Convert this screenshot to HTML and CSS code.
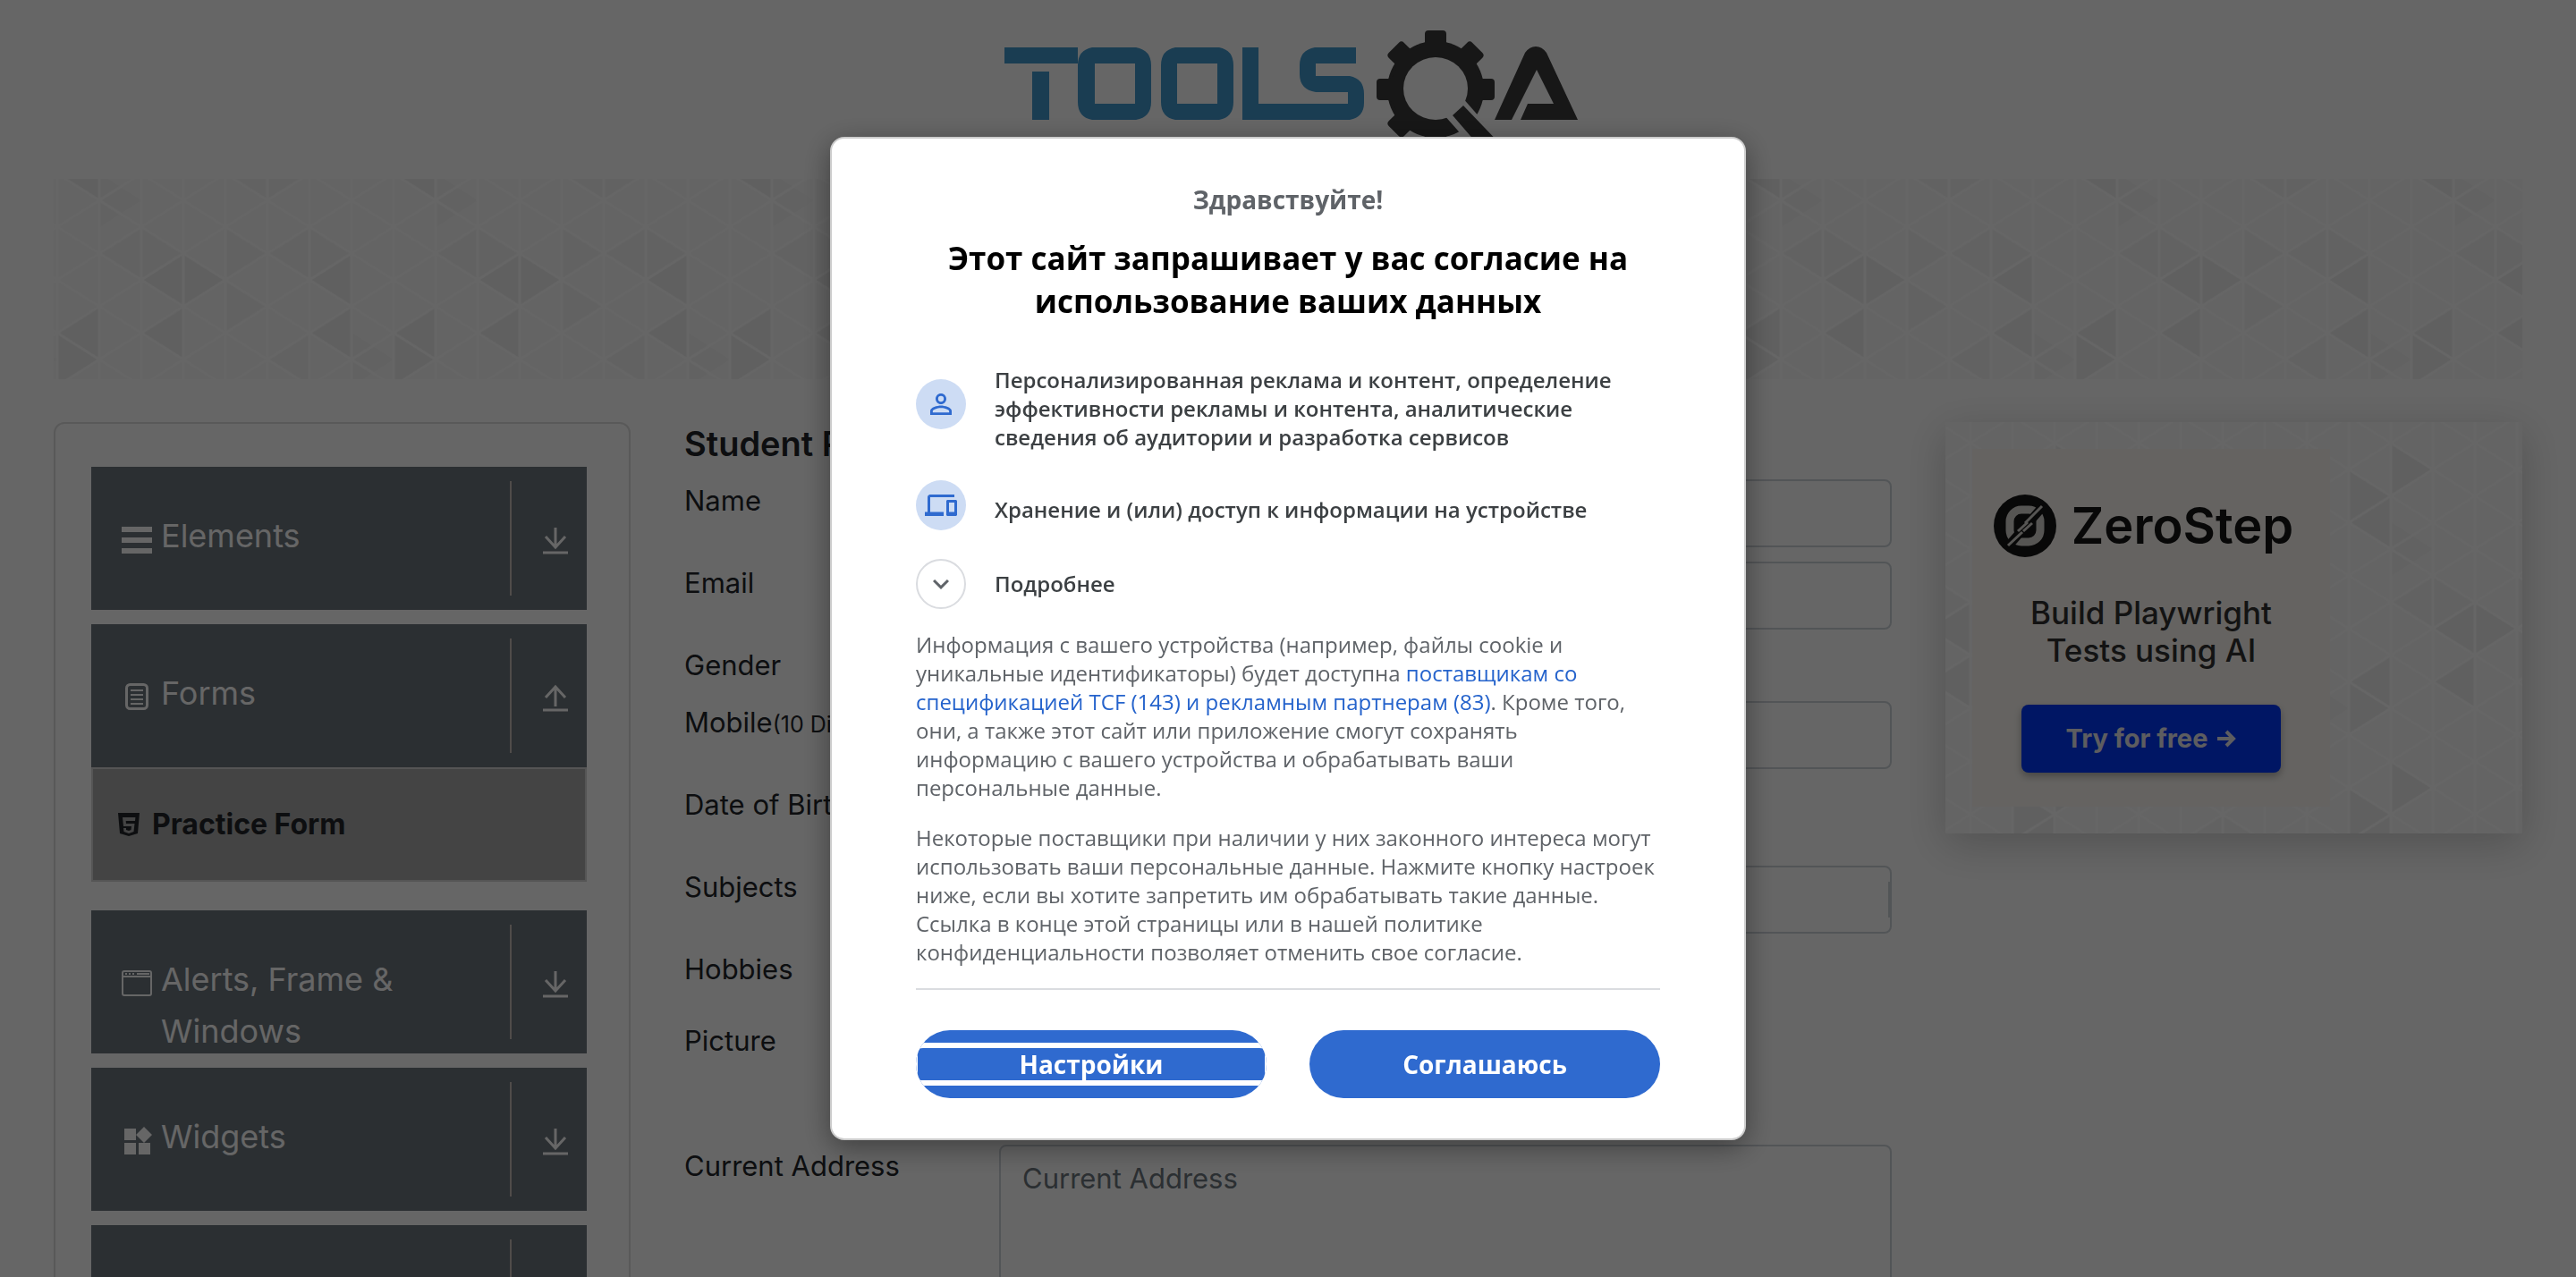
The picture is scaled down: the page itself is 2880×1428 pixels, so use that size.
FILE: index.html
```html
<!DOCTYPE html>
<html lang="ru">
<head>
<meta charset="utf-8">
<meta name="viewport" content="width=device-width, initial-scale=1">
<title>ToolsQA</title>
<link rel="stylesheet" href="styles.css">
</head>
<body>
<svg class="sprite" aria-hidden="true">
  <symbol id="arrow-down" viewBox="0 0 28 32"><path d="M14 1v22M3 11l11 12 11-12M0 29h28" fill="none" stroke="currentColor" stroke-width="3"/></symbol>
  <symbol id="arrow-up" viewBox="0 0 28 32"><path d="M14 25V3M3 15L14 3l11 12M0 29h28" fill="none" stroke="currentColor" stroke-width="3"/></symbol>
</svg>

<header class="site-header">
  <a href="#" class="logo" aria-label="ToolsQA">
    <svg viewBox="1115 33 650 134" width="650" height="134" aria-hidden="true">
      <g fill="#4299ce">
        <path d="M1123 53h82v18h-82zM1154 80h19v54h-19z"/>
        <path fill-rule="evenodd" d="M1221 53h49q17 3 17 20v41q0 17-17 20h-49q-16-3-16-20V73q0-17 16-20zM1224 71v45h45V71z"/>
        <path fill-rule="evenodd" d="M1314 53h49q16 3 16 20v41q0 17-16 20h-49q-16-3-16-20V73q0-17 16-20zM1316 71v45h45V71z"/>
        <path d="M1389 53h18v63h100v-13h-36q-18-3-18-20V73q0-17 17-20h46v18h-45v14h38q16 3 16 20v10q0 16-16 19h-120z"/>
      </g>
      <mask id="gear-cut">
        <path fill="#fff" d="M1530 30h150v140h-150z"/>
        <ellipse cx="1605" cy="99" rx="36" ry="35"/>
        <path d="M1634 108l56 64h-37l-39-44z"/>
      </mask>
      <g fill="#3a3a3a">
        <g mask="url(#gear-cut)">
          <circle cx="1605" cy="100" r="54"/>
          <path id="tooth" d="M1597 34h16q4 0 4 4v9q1 6 9 8v90q-8 2-9 8v9q0 4-4 4h-16q-4 0-4-4v-9q-1-6-9-8V55q8-2 9-8v-9q0-4 4-4z"/>
          <use href="#tooth" transform="rotate(45 1605 100)"/>
          <use href="#tooth" transform="rotate(90 1605 100)"/>
          <use href="#tooth" transform="rotate(135 1605 100)"/>
        </g>
        <path d="M1636 118l46 48h-26l-32-37z"/>
        <path d="M1671 134l34-75q5-7 12-7t12 7l35 75h-64l8-18h29l-19-38-28 56z"/>
      </g>
    </svg>
  </a>
</header>

<main class="page">
  <div class="banner"></div>
  <div class="columns">
    <nav class="sidebar">
      <section class="group">
        <button type="button" class="group-head">
          <svg class="group-icon" viewBox="0 0 34 34"><path d="M0 3h34v6H0zM0 15h34v6H0zM0 27h34v6H0z" fill="currentColor"/></svg>
          <span class="group-title">Elements</span>
          <span class="group-toggle"><svg viewBox="0 0 28 32"><use href="#arrow-down"/></svg></span>
        </button>
      </section>
      <section class="group open">
        <button type="button" class="group-head">
          <svg class="group-icon" viewBox="0 0 34 34"><rect x="5.500" y="3.500" width="23" height="27" rx="4" fill="none" stroke="currentColor" stroke-width="3"/><path d="M10 10h14M10 15h14M10 20h14M10 25h14" stroke="currentColor" stroke-width="2"/></svg>
          <span class="group-title">Forms</span>
          <span class="group-toggle"><svg viewBox="0 0 28 32"><use href="#arrow-up"/></svg></span>
        </button>
        <a href="#" class="group-item">
          <svg viewBox="0 0 24 28"><path fill="currentColor" fill-rule="evenodd" d="M0 1h24l-2 23-10 3-10-3zM5 6l1 10h9l-.5 4-2.500 1-3-1v-2H6l.5 4 5.500 2 5.500-2 1-9H9l-.3-3H19l.4-4z"/></svg>
          Practice Form
        </a>
      </section>
      <section class="group">
        <button type="button" class="group-head">
          <svg class="group-icon" viewBox="0 0 34 34"><rect x="1" y="4" width="32" height="27" rx="2" fill="none" stroke="currentColor" stroke-width="2"/><path d="M1 10h32" stroke="currentColor" stroke-width="2"/><path d="M4 7h2M8 7h2M12 7h2M17 7h14" stroke="currentColor" stroke-width="2"/></svg>
          <span class="group-title">Alerts, Frame &amp; Windows</span>
          <span class="group-toggle"><svg viewBox="0 0 28 32"><use href="#arrow-down"/></svg></span>
        </button>
      </section>
      <section class="group">
        <button type="button" class="group-head">
          <svg class="group-icon" viewBox="0 0 34 34"><path fill="currentColor" d="M3 4h13v13H3zM3 20h13v13H3zM19 20h13v13H19zM25 2l9 9-9 9-9-9z"/></svg>
          <span class="group-title">Widgets</span>
          <span class="group-toggle"><svg viewBox="0 0 28 32"><use href="#arrow-down"/></svg></span>
        </button>
      </section>
      <section class="group">
        <button type="button" class="group-head" aria-label="Interactions">
          <span class="group-title"></span>
          <span class="group-toggle"></span>
        </button>
      </section>
    </nav>

    <form class="form">
      <h1 class="form-title">Student Registration Form</h1>
      <div class="row"><label for="name">Name</label><input id="name" type="text"></div>
      <div class="row"><label for="email">Email</label><input id="email" type="email"></div>
      <div class="row row-gender"><span>Gender</span></div>
      <div class="row"><label for="mobile">Mobile<small>(10 Digits)</small></label><input id="mobile" type="tel"></div>
      <div class="row"><label for="birth">Date of Birth</label><input id="birth" class="short" type="text"></div>
      <div class="row"><label for="subjects">Subjects</label><div class="subjects"><input id="subjects" type="text"><span class="subjects-bar"></span></div></div>
      <div class="row row-hobbies"><span>Hobbies</span></div>
      <div class="row row-picture"><span>Picture</span></div>
      <div class="row"><label for="address">Current Address</label><textarea id="address" rows="5" placeholder="Current Address"></textarea></div>
    </form>

    <aside class="promo">
      <div class="promo-card">
        <div class="promo-brand">
          <svg viewBox="0 0 72 72" aria-hidden="true"><circle cx="36" cy="36" r="35" fill="#161616"/><rect x="19" y="18" width="34" height="36" rx="13" fill="none" stroke="#d8d4cf" stroke-width="9"/><path d="M16 60L58 12" stroke="#161616" stroke-width="10"/><path d="M55 14L36 33M39 32L28 42M44 33L34 42M33 43L17 58" stroke="#d8d4cf" stroke-width="3"/></svg>
          <span>ZeroStep</span>
        </div>
        <p class="promo-text">Build Playwright<br>Tests using AI</p>
        <a href="#" class="promo-button">Try for free
          <svg viewBox="0 0 22 22" aria-hidden="true"><path d="M1 11h18M11 3l8 8-8 8" fill="none" stroke="currentColor" stroke-width="4"/></svg>
        </a>
      </div>
    </aside>
  </div>
</main>

<div class="overlay">
  <div class="dialog" role="dialog" aria-modal="true" aria-labelledby="dialog-title">
    <p class="greeting">Здравствуйте!</p>
    <h2 class="dialog-title" id="dialog-title">Этот сайт запрашивает у вас согласие на использование ваших данных</h2>
    <ul class="purposes">
      <li>
        <span class="round"><svg viewBox="0 0 24 24"><path fill="currentColor" d="M12 5.900a2.100 2.100 0 1 1 0 4.200 2.100 2.100 0 0 1 0-4.200m0 9c2.970 0 6.100 1.460 6.100 2.100v1.100H5.900V17c0-.64 3.130-2.100 6.100-2.100M12 4C9.790 4 8 5.790 8 8s1.790 4 4 4 4-1.790 4-4-1.790-4-4-4zm0 9c-2.670 0-8 1.340-8 4v3h16v-3c0-2.660-5.330-4-8-4z"/></svg></span>
        <span class="purpose">Персонализированная реклама и контент, определение эффективности рекламы и контента, аналитические сведения об аудитории и разработка сервисов</span>
      </li>
      <li>
        <span class="round"><svg viewBox="0 0 24 24"><path fill="currentColor" d="M4 6h18V4H4c-1.100 0-2 .9-2 2v11H0v3h14v-3H4V6zm19 2h-6c-.55 0-1 .45-1 1v10c0 .55.45 1 1 1h6c.55 0 1-.45 1-1V9c0-.55-.45-1-1-1zm-1 9h-4v-7h4v7z"/></svg></span>
        <span class="purpose">Хранение и (или) доступ к информации на устройстве</span>
      </li>
    </ul>
    <button type="button" class="more">
      <span class="round hollow"><svg viewBox="0 0 24 24"><path fill="currentColor" d="M16.590 8.590L12 13.170 7.410 8.590 6 10l6 6 6-6z"/></svg></span>
      Подробнее
    </button>
    <p class="copy">Информация с вашего устройства (например, файлы cookie и уникальные идентификаторы) будет доступна <a href="#">поставщикам со спецификацией TCF (143) и рекламным партнерам (83)</a>. Кроме того, они, а также этот сайт или приложение смогут сохранять информацию с вашего устройства и обрабатывать ваши персональные данные.</p>
    <p class="copy">Некоторые поставщики при наличии у них законного интереса могут использовать ваши персональные данные. Нажмите кнопку настроек ниже, если вы хотите запретить им обрабатывать такие данные. Ссылка в конце этой страницы или в нашей политике конфиденциальности позволяет отменить свое согласие.</p>
    <div class="actions">
      <button type="button" class="action focused"><span>Настройки</span></button>
      <button type="button" class="action"><span>Соглашаюсь</span></button>
    </div>
  </div>
</div>
</body>
</html>
```
FILE: styles.css
```css
:root {
  --facets: url("data:image/svg+xml,%3Csvg xmlns='http://www.w3.org/2000/svg' width='376' height='356'%3E%3Cdefs%3E%3Cpattern id='l' x='34' y='179' width='94' height='59.333' patternUnits='userSpaceOnUse'%3E%3Cpath d='M0 0L94 59.333M0 59.333L94 0M0 0V60M47 0V60M94 0V60' stroke='%23fefefe' stroke-width='3' fill='none'/%3E%3C/pattern%3E%3C/defs%3E%3Cpath fill='%23fafafa' d='M0 0h376v356H0z'/%3E%3Cg fill='%23f6f6f6'%3E%3Cpath d='M128 119v60l47-30zM222 119v60l-47-30zM34 119v60l-47-30zM34 119v60l47-30zM410 119v60l-47-30zM222 119v60l47-30zM175 30v60l-47-30zM175 30v60l47-30zM222 238v60l-47-30zM-13 60v60l47-30zM363 60v60l13-8V68zM128 179v60l47-30zM269 238v60l47-30z'/%3E%3C/g%3E%3Cg fill='%23f0f0f0'%3E%3Cpath d='M81 149v60l-47-30zM81 149v60l47-30zM269 149v60l-47-30zM81 208v60l-47-30zM269 208v60l-47-30zM363 208v60l-47-30zM316 238v60l47-30zM363 30v60l-47-30zM316 0v60l47-30zM-13-29v60L34 1zM-13 327v60l47-30zM363 327v60l47-30zM363-29v60l47-30z'/%3E%3C/g%3E%3Cpath fill='url(%23l)' d='M0 0h376v356H0z'/%3E%3C/svg%3E");
}

* { box-sizing: border-box; }

body {
  margin: 0;
  height: 100vh;
  overflow: hidden;
  background: #fff;
  color: #212529;
  font-family: Inter, "Liberation Sans", sans-serif;
  font-size: 31px;
  line-height: 48px;
}

button, input, textarea { font: inherit; }
.sprite { position: absolute; width: 0; height: 0; }

.site-header {
  display: flex;
  justify-content: center;
  padding: 33px 0;
}
.logo, .logo svg { display: block; }

.page { padding: 0 60px; }
.banner {
  height: 224px;
  margin-bottom: 48px;
  background: var(--facets) center;
}

.columns {
  display: grid;
  grid-template-columns: repeat(12, 1fr);
  column-gap: 60px;
  align-items: start;
}

/* Sidebar */
.sidebar {
  grid-column: span 3;
  display: flex;
  flex-direction: column;
  gap: 16px;
  padding: 48px 47px 48px 40px;
  border: 2px solid #dfdfdf;
  border-radius: 12px;
}
.group.open { margin-bottom: 16px; }
.group-head {
  display: flex;
  align-items: flex-start;
  gap: 10px;
  width: 100%;
  height: 160px;
  padding: 16px 20px 16px 34px;
  overflow: hidden;
  border: 0;
  background: #6c757d;
  color: #fff;
  font-size: 36px;
  line-height: 58px;
  text-align: left;
}
.group-icon {
  flex: none;
  width: 34px;
  height: 34px;
  margin-top: 48px;
}
.group-title {
  flex: 1;
  padding-top: 32px;
}
.group-toggle {
  display: flex;
  width: 66px;
  height: 128px;
  padding: 51px 0 0 35px;
  border-left: 2px solid #c8beb9;
}
.group-toggle svg {
  flex: none;
  width: 28px;
  height: 32px;
}
.group-item {
  display: flex;
  align-items: center;
  gap: 14px;
  height: 128px;
  padding-left: 28px;
  border: 2px solid #d5d5d5;
  background: #aaa;
  color: #212529;
  font-size: 32px;
  font-weight: 700;
  text-decoration: none;
}
.group-item svg { width: 24px; height: 28px; }

/* Form */
.form { grid-column: span 6; }
.form-title {
  margin: 0 0 16px;
  font-size: 38px;
  font-weight: 600;
  line-height: 48px;
}
.row {
  display: grid;
  grid-template-columns: 292px 1fr;
  column-gap: 60px;
  align-items: start;
  margin-bottom: 16px;
  white-space: nowrap;
}
.row small { font-size: 25px; }
.row-gender { height: 48px; }
.row-hobbies { height: 64px; }
.row-picture { height: 124px; }
.row input, .row textarea, .subjects {
  display: block;
  width: 100%;
  height: 76px;
  padding: 12px 24px;
  border: 2px solid #ced4da;
  border-radius: 8px;
  background: #fff;
  color: #495057;
}
.row textarea { height: 260px; resize: none; }
.row textarea::placeholder { color: #6c757d; }
.row .short { width: 440px; }
.row .subjects {
  display: flex;
  align-items: center;
  padding: 0;
}
.row .subjects input { height: 60px; border: 0; }
.subjects-bar { width: 2px; height: 40px; background: #ced4da; }

/* Promo */
.promo {
  grid-column: span 3;
  padding: 30px;
  background: var(--facets) center;
  box-shadow: 0 12px 44px rgba(0, 0, 0, .2);
}
.promo-card {
  display: flex;
  flex-direction: column;
  align-items: center;
  width: 400px;
  height: 400px;
  padding-top: 50px;
  background: #fcf8f3;
  color: #303030;
}
.promo-brand {
  display: flex;
  align-items: center;
  gap: 16px;
  margin-right: 18px;
  color: #161616;
  font-size: 56px;
  font-weight: 600;
  line-height: 72px;
}
.promo-brand svg { width: 72px; height: 72px; }
.promo-text {
  margin: 40px 0 0;
  font-size: 35px;
  font-weight: 500;
  line-height: 42px;
  text-align: center;
}
.promo-button {
  display: flex;
  align-items: center;
  justify-content: center;
  gap: 10px;
  width: 290px;
  height: 76px;
  margin-top: 40px;
  border-radius: 8px;
  background: #0037fa;
  box-shadow: 0 4px 8px rgba(0, 0, 0, .3);
  color: #e8e8f0;
  font-size: 29px;
  font-weight: 700;
  text-decoration: none;
}
.promo-button svg { width: 22px; height: 22px; }

/* Consent dialog */
.overlay {
  position: fixed;
  inset: 0;
  display: flex;
  align-items: center;
  justify-content: center;
  background: rgba(0, 0, 0, .6);
}
.dialog {
  width: 1024px;
  padding: 48px 94px 45px;
  border: 2px solid #ccc;
  border-radius: 16px;
  background: #fff;
  box-shadow: 0 8px 32px rgba(0, 0, 0, .4);
  color: #5f6368;
  font-family: "Open Sans", "Noto Sans", sans-serif;
  font-size: 24px;
  line-height: 32px;
}
.greeting {
  margin: 0 0 22px;
  font-size: 28px;
  font-weight: 700;
  line-height: 40px;
  text-align: center;
}
.dialog-title {
  margin: 0 0 38px;
  color: #000;
  font-size: 35px;
  font-weight: 700;
  line-height: 48px;
  text-align: center;
}
.purposes {
  display: flex;
  flex-direction: column;
  gap: 32px;
  margin: 0 0 32px;
  padding: 0;
  list-style: none;
}
.purposes li, .more {
  display: flex;
  align-items: center;
  gap: 32px;
  color: #3c4043;
  font-weight: 600;
}
.purpose { padding-top: 10px; }
.more {
  margin: 0 0 24px;
  padding: 0;
  border: 0;
  background: none;
}
.round {
  display: flex;
  flex: none;
  align-items: center;
  justify-content: center;
  width: 56px;
  height: 56px;
  border-radius: 50%;
  background: #cddcf4;
  color: #2f6acf;
}
.round svg { width: 36px; height: 36px; }
.round.hollow {
  border: 2px solid #dadce0;
  background: none;
  color: #5f6368;
}
.copy { margin: 0 0 24px; }
.copy a {
  color: #2563cc;
  font-weight: 500;
  text-decoration: none;
}
.actions {
  display: flex;
  gap: 48px;
  padding-top: 45px;
  border-top: 2px solid #dadce0;
}
.action {
  display: flex;
  flex: 1;
  align-items: center;
  height: 76px;
  padding: 0;
  overflow: hidden;
  border: 0;
  border-radius: 38px;
  background: #2f6acf;
  color: #fff;
  font-size: 28px;
  font-weight: 700;
  line-height: 36px;
}
.action span { flex: 1; }
.focused span {
  border: 2px solid #fff;
  border-width: 6px 2px;
  border-radius: 8px;
}
```
